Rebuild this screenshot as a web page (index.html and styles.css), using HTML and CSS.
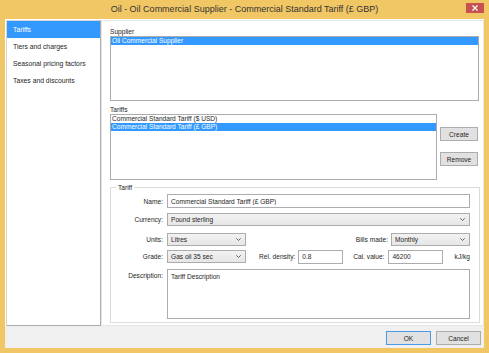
FILE: index.html
```html
<!DOCTYPE html>
<html lang="en">
<head>
  <meta charset="UTF-8" />
  <title>Oil - Oil Commercial Supplier - Commercial Standard Tariff (£ GBP)</title>
  <link rel="stylesheet" href="styles.css">
</head>
<body>
  <div class="window">
    <div class="titlebar">
      <span class="title">Oil - Oil Commercial Supplier - Commercial Standard Tariff (£ GBP)</span>
      <button class="close" aria-label="Close">
        <svg width="6" height="6" viewBox="0 0 6 6"><path d="M0.5 0.5 L5.5 5.5 M5.5 0.5 L0.5 5.5" stroke="#fff" stroke-width="1.2"/></svg>
      </button>
    </div>

    <div class="client">
      <div class="main">
        <ul class="nav">
          <li class="active">Tariffs</li>
          <li>Tiers and charges</li>
          <li>Seasonal pricing factors</li>
          <li>Taxes and discounts</li>
        </ul>

        <div class="content">
          <div class="caption">Supplier</div>
          <div class="listbox supplier">
            <div class="item selected">Oil Commercial Supplier</div>
          </div>

          <div class="caption tariffs-caption">Tariffs</div>
          <div class="tariffs-row">
            <div class="listbox tariffs">
              <div class="item">Commercial Standard Tariff ($ USD)</div>
              <div class="item selected">Commercial Standard Tariff (£ GBP)</div>
            </div>
            <div class="side-buttons">
              <button class="btn create">Create</button>
              <button class="btn remove">Remove</button>
            </div>
          </div>

          <fieldset class="group">
            <legend>Tariff</legend>

            <div class="row">
              <label>Name:</label>
              <input class="input grow" value="Commercial Standard Tariff (£ GBP)">
            </div>

            <div class="row">
              <label>Currency:</label>
              <div class="combo grow"><span>Pound sterling</span><svg class="chev" width="5" height="3" viewBox="0 0 5 3"><path d="M0.3 0.3 L2.5 2.5 L4.7 0.3" fill="none" stroke="#555" stroke-width="0.9"/></svg></div>
            </div>

            <div class="row row-units">
              <label>Units:</label>
              <div class="combo short"><span>Litres</span><svg class="chev" width="5" height="3" viewBox="0 0 5 3"><path d="M0.3 0.3 L2.5 2.5 L4.7 0.3" fill="none" stroke="#555" stroke-width="0.9"/></svg></div>
              <span class="inline-label bills">Bills made:</span>
              <div class="combo short"><span>Monthly</span><svg class="chev" width="5" height="3" viewBox="0 0 5 3"><path d="M0.3 0.3 L2.5 2.5 L4.7 0.3" fill="none" stroke="#555" stroke-width="0.9"/></svg></div>
            </div>

            <div class="row row-grade">
              <label>Grade:</label>
              <div class="combo short"><span>Gas oil 35 sec</span><svg class="chev" width="5" height="3" viewBox="0 0 5 3"><path d="M0.3 0.3 L2.5 2.5 L4.7 0.3" fill="none" stroke="#555" stroke-width="0.9"/></svg></div>
              <span class="inline-label density">Rel. density:</span>
              <input class="input density-input" value="0.8">
              <span class="inline-label calorific">Cal. value:</span>
              <input class="input cal-input" value="46200">
              <span class="unit">kJ/kg</span>
            </div>

            <div class="row row-desc">
              <label>Description:</label>
              <textarea class="input grow desc">Tariff Description</textarea>
            </div>
          </fieldset>
        </div>
      </div>

      <div class="footer">
        <button class="btn default">OK</button>
        <button class="btn">Cancel</button>
      </div>
    </div>
  </div>
</body>
</html>
```

FILE: styles.css
```css
body {
  margin: 0;
  background-color: #f1c766;
  font-family: "Liberation Sans", Arial, sans-serif;
  color: #262626;
}

.window {
  width: 489px;
  height: 353px;
  display: flex;
  flex-direction: column;
}

/* title bar */
.titlebar {
  height: 19px;
  flex: none;
  display: grid;
  grid-template-columns: 1fr auto 1fr;
  align-items: start;
}

.title {
  grid-column: 2;
  font-size: 9px;
  line-height: 19px;
  color: #333;
  white-space: nowrap;
}

.close {
  grid-column: 3;
  justify-self: end;
  width: 18px;
  height: 10px;
  margin: 3px 5px 0 0;
  padding: 0;
  border: 0;
  background: #c75050;
  display: flex;
  align-items: center;
  justify-content: center;
}

/* client area */
.client {
  flex: 1;
  margin: 0 5px 5px;
  background: #fff;
  display: flex;
  flex-direction: column;
  min-height: 0;
}

.main {
  flex: 1;
  display: flex;
  padding: 1px 0 0 1px;
  min-height: 0;
}

.nav {
  width: 95px;
  box-sizing: border-box;
  margin: 0;
  padding: 0;
  list-style: none;
  border: 1px solid #d6d6d6;
  border-right-color: #adadad;
  border-bottom-color: #adadad;
  font-size: 6.8px;
}

.nav li {
  height: 17px;
  line-height: 17px;
  padding-left: 6px;
}

.nav li.active {
  background: #3399ff;
  color: #fff;
}

.content {
  flex: 1;
  border: 1px solid #e6e6e6;
  padding: 6px 4px 2px 8px;
  display: flex;
  flex-direction: column;
  font-size: 6.6px;
}

.caption {
  line-height: 9px;
}

.tariffs-caption {
  margin-top: 4px;
}

.listbox {
  box-sizing: border-box;
  border: 1px solid #acacac;
  background: #fff;
  line-height: 8px;
}

.supplier {
  height: 65px;
}

.item {
  padding-left: 1px;
  white-space: nowrap;
}

.item.selected {
  background: #3399ff;
  color: #fff;
}

.tariffs-row {
  display: flex;
}

.tariffs {
  width: 327px;
  height: 66px;
}

.side-buttons {
  display: flex;
  flex-direction: column;
  margin-left: 3px;
}

.btn {
  box-sizing: border-box;
  height: 14px;
  padding: 0;
  border: 1px solid #adadad;
  background: #e1e1e1;
  font-family: inherit;
  font-size: 6.6px;
  color: #262626;
}

.create,
.remove {
  width: 38px;
}

.create { margin-top: 13px; }
.remove { margin-top: 11px; }

/* tariff group */
.group {
  flex: 1;
  margin: 3px -1px 0 0;
  padding: 0 9px 3px 0;
  border: 1px solid #dcdcdc;
  display: flex;
  flex-direction: column;
  min-width: 0;
}

.group legend {
  margin-left: 5px;
  padding: 0 2px;
  line-height: 9px;
}

.row {
  display: flex;
  align-items: center;
  height: 14px;
  margin-top: 4px;
}

.row:first-of-type {
  margin-top: 2px;
}

.row label {
  flex: none;
  width: 52px;
  margin-right: 4px;
  text-align: right;
}

.input {
  box-sizing: border-box;
  height: 14px;
  margin: 0;
  padding: 0 3px;
  border: 1px solid #abadb3;
  background: #fff;
  font-family: inherit;
  font-size: 6.6px;
  color: #262626;
  outline: none;
}

.grow {
  flex: 1;
  min-width: 0;
}

.combo {
  box-sizing: border-box;
  height: 13px;
  display: flex;
  align-items: center;
  justify-content: space-between;
  padding: 0 4px 0 3px;
  border: 1px solid #acacac;
  background: linear-gradient(#f2f2f2, #e6e6e6);
}

.combo.short {
  width: 79px;
}

.row-units {
  margin-top: 7px;
  height: 13px;
}

.bills {
  margin-left: auto;
  margin-right: 3px;
}

.row-grade {
  margin-top: 3px;
  height: 15px;
}

.density {
  margin-left: 13px;
  margin-right: 3px;
}

.density-input {
  width: 45px;
}

.calorific {
  margin-left: 10px;
  margin-right: 4px;
}

.cal-input {
  width: 55px;
}

.unit {
  margin-left: auto;
}

.row-desc {
  align-items: flex-start;
  height: 50px;
  margin-top: 5px;
}

.row-desc label {
  line-height: 14px;
}

.desc {
  height: 50px;
  padding-top: 3px;
  resize: none;
  line-height: 8px;
}

/* footer */
.footer {
  height: 22px;
  flex: none;
  box-sizing: border-box;
  background: #f0f0f0;
  display: flex;
  justify-content: flex-end;
  align-items: flex-start;
  gap: 5px;
  padding: 5px 3px 0 0;
}

.footer .btn {
  width: 45px;
}

.footer .default {
  border-color: #4a9ae8;
}
```
